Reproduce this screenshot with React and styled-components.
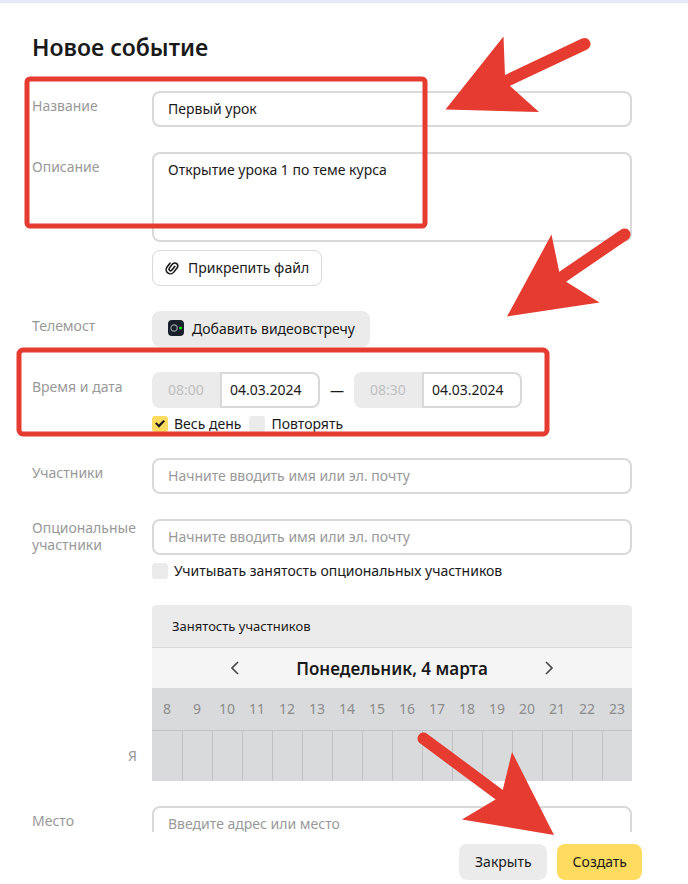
import { useState } from "react";
import styled, { createGlobalStyle, css } from "styled-components";

const GlobalStyle = createGlobalStyle`
  * {
    box-sizing: border-box;
  }
  body {
    margin: 0;
    background: #fff;
  }
  body, button, input, textarea {
    font-family: "Noto Sans", "Open Sans", sans-serif;
    font-size: 14px;
    color: #1a1a1a;
  }
`;

const Page = styled.div`
  position: relative;
  display: flex;
  flex-direction: column;
  height: 100vh;
  overflow: hidden;
  border-top: 3px solid #e6eaf7;
`;

const Form = styled.form`
  flex: 1;
  min-height: 0;
  overflow: hidden;
  padding: 29px 56px 0 32px;
`;

const Title = styled.h1`
  margin: 0 0 29px;
  font-size: 23px;
  line-height: 30px;
  font-weight: 600;
`;

const Rows = styled.div`
  display: flex;
  flex-direction: column;
  gap: 25px;
`;

const Row = styled.div`
  display: grid;
  grid-template-columns: 120px minmax(0, 1fr);
`;

const Label = styled.label`
  padding-top: ${(props) => (props.$double ? 0 : 6)}px;
  padding-right: 16px;
  line-height: 17px;
  color: #999;
`;

const SelfLabel = styled.span`
  align-self: end;
  padding: 0 15px 17px 0;
  line-height: 17px;
  text-align: right;
  color: #999;
`;

const Control = styled.div`
  display: flex;
  flex-direction: column;
  align-items: flex-start;
  gap: 8px;
`;

const field = css`
  display: block;
  width: 100%;
  border: 2px solid #d9d9d9;
  border-radius: 8px;
  background: #fff;
  outline: none;

  &::placeholder {
    color: #999;
    opacity: 1;
  }
`;

const Input = styled.input`
  ${field}
  height: 36px;
  padding: 0 14px 2px;
`;

const TextArea = styled.textarea`
  ${field}
  height: 90px;
  padding: 7px 14px;
  line-height: 18px;
  resize: none;
`;

const Button = styled.button`
  display: flex;
  align-items: center;
  gap: 8px;
  height: 36px;
  padding: 0 15px 2px 16px;
  border: 0;
  border-radius: 8px;
  background: ${(props) => (props.$primary ? "#ffdb60" : "#ebebeb")};
  cursor: pointer;
`;

const OutlineButton = styled(Button)`
  padding: 0 12px 2px 11px;
  border: 1px solid #d9d9d9;
  background: #fff;
`;

const Period = styled.div`
  display: flex;
  align-items: center;
  gap: 10px;
`;

const DateTime = styled.div`
  display: flex;
  width: 168px;
`;

const TimeInput = styled.input`
  width: 68px;
  height: 36px;
  padding: 0 0 2px 16px;
  border: 0;
  border-radius: 8px 0 0 8px;
  background: #ebebeb;

  &:disabled {
    color: #bfbfbf;
  }
`;

const DateInput = styled.input`
  ${field}
  flex: 1;
  min-width: 0;
  height: 36px;
  padding: 0 8px 2px;
  border-radius: 0 8px 8px 0;
`;

const Checks = styled.div`
  display: flex;
  gap: 8px;
`;

const CheckLabel = styled.label`
  display: flex;
  align-items: flex-start;
  gap: 6px;
  height: 17px;
  line-height: 16px;
  cursor: pointer;
`;

const Checkbox = styled.input`
  appearance: none;
  display: grid;
  width: 16px;
  height: 16px;
  margin: 0;
  border-radius: 3px;
  background: #ebebeb;

  &:checked {
    background: #ffdb60;
  }
  &:checked::before {
    content: "";
    width: 10px;
    height: 8px;
    place-self: center;
    background: #1a1a1a;
    clip-path: polygon(0 45%, 16% 28%, 38% 55%, 84% 0, 100% 16%, 40% 96%);
  }
`;

const Busy = styled.section`
  width: 100%;
  border-radius: 4px 4px 0 0;
  overflow: hidden;
`;

const BusyHeader = styled.h2`
  margin: 0;
  padding: 0 20px;
  border-bottom: 1px solid #d9d9d9;
  background: #ebebeb;
  font-size: 13px;
  line-height: 42px;
  font-weight: 400;
`;

const DayNav = styled.div`
  display: flex;
  align-items: center;
  justify-content: space-between;
  height: 40px;
  padding: 0 74px;
  background: #f5f5f5;
  font-size: 17px;
  font-weight: 600;
`;

const NavButton = styled.button`
  display: flex;
  padding: 0;
  border: 0;
  background: none;
  cursor: pointer;
`;

const Hours = styled.table`
  width: 100%;
  table-layout: fixed;
  border-collapse: collapse;
  background: #d9dadc;

  th {
    height: 42px;
    padding: 0;
    border-bottom: 1px solid #c0c1c3;
    font-weight: 400;
    color: #8c8c8c;
  }
  td {
    height: 51px;
    padding: 0;
  }
  td + td {
    border-left: 1px solid #c0c1c3;
  }
`;

const Footer = styled.footer`
  display: flex;
  justify-content: flex-end;
  gap: 10px;
  padding: 12px 46px 4px;
`;

const Marks = styled.svg`
  position: absolute;
  top: -3px;
  left: 0;
  pointer-events: none;
`;

const ClipIcon = () => (
  <svg width="16" height="16" viewBox="0 0 16 16" fill="none" stroke="#1a1a1a">
    <path
      transform="translate(8 8.500) rotate(38) scale(0.850)"
      d="M1.800-3V2.500a1.900 1.900 0 0 1-3.800 0V-3.500a3.500 3.500 0 0 1 7 0V3a5 5 0 0 1-10 0V-2.500"
      strokeWidth="1.9"
      strokeLinecap="round"
      strokeLinejoin="round"
    />
  </svg>
);

const VideoIcon = () => (
  <svg width="16" height="16" viewBox="0 0 16 16">
    <rect width="16" height="16" rx="4" fill="#17202b" />
    <circle cx="6" cy="8" r="3.1" fill="none" stroke="#9aa0a6" strokeWidth="1.1" />
    <rect x="11.300" y="6.800" width="2.500" height="2.500" rx="0.600" fill="#00f01c" />
  </svg>
);

const Chevron = ({ right }) => (
  <svg width="18" height="18" viewBox="0 0 18 18" fill="none" stroke="#444" strokeWidth="1.6">
    <path d={right ? "M6 3l6 6-6 6" : "M12 3L6 9l6 6"} />
  </svg>
);

const HOURS = [8, 9, 10, 11, 12, 13, 14, 15, 16, 17, 18, 19, 20, 21, 22, 23];

const Check = ({ label, checked = false }) => {
  const [on, setOn] = useState(checked);
  return (
    <CheckLabel>
      <Checkbox type="checkbox" checked={on} onChange={() => setOn(!on)} />
      {label}
    </CheckLabel>
  );
};

const Moment = ({ id, name, time, date }) => (
  <DateTime>
    <TimeInput disabled defaultValue={time} aria-label={`${name}: время`} />
    <DateInput id={id} defaultValue={date} aria-label={`${name}: дата`} />
  </DateTime>
);

const Highlights = () => (
  <Marks width="688" height="884" viewBox="0 0 688 884" fill="#e53b30" aria-hidden="true">
    <g fill="none" stroke="#e53b30" strokeWidth="5">
      <rect x="27" y="79" width="398" height="147" rx="3" />
      <rect x="19" y="350" width="528" height="84" rx="4" />
    </g>
    <g stroke="#e53b30" strokeWidth="12" strokeLinecap="round">
      <path d="M584.5 44 500 84" />
      <path d="M624.5 234.5 555 282" />
      <path d="M423.5 738.5 505 799" />
    </g>
    <path d="M445.5 109.5 503.5 36.5 505 76 510 86 539 112Z" />
    <path d="M507 316.5 551.5 234.5 559.5 273 566.5 282 599.5 302.5Z" />
    <path d="M554 835 512 752 502.5 791 495.5 799.5 462 819.5Z" />
  </Marks>
);

const App = () => (
  <>
    <GlobalStyle />
    <Page>
      <Form id="event" onSubmit={(e) => e.preventDefault()}>
        <Title>Новое событие</Title>
        <Rows>
          <Row>
            <Label htmlFor="name">Название</Label>
            <Input id="name" defaultValue="Первый урок" />
          </Row>
          <Row>
            <Label htmlFor="description">Описание</Label>
            <Control>
              <TextArea id="description" defaultValue="Открытие урока 1 по теме курса" />
              <OutlineButton type="button">
                <ClipIcon />
                Прикрепить файл
              </OutlineButton>
            </Control>
          </Row>
          <Row>
            <Label htmlFor="video">Телемост</Label>
            <Control>
              <Button type="button" id="video">
                <VideoIcon />
                Добавить видеовстречу
              </Button>
            </Control>
          </Row>
          <Row>
            <Label htmlFor="start">Время и дата</Label>
            <Control>
              <Period>
                <Moment id="start" name="Начало" time="08:00" date="04.03.2024" />
                <span>—</span>
                <Moment id="end" name="Конец" time="08:30" date="04.03.2024" />
              </Period>
              <Checks>
                <Check label="Весь день" checked />
                <Check label="Повторять" />
              </Checks>
            </Control>
          </Row>
          <Row>
            <Label htmlFor="members">Участники</Label>
            <Input id="members" placeholder="Начните вводить имя или эл. почту" />
          </Row>
          <Row>
            <Label htmlFor="optional" $double>
              Опциональные участники
            </Label>
            <Control>
              <Input id="optional" placeholder="Начните вводить имя или эл. почту" />
              <Check label="Учитывать занятость опциональных участников" />
            </Control>
          </Row>
          <Row>
            <SelfLabel>Я</SelfLabel>
            <Busy>
              <BusyHeader>Занятость участников</BusyHeader>
              <DayNav>
                <NavButton type="button" aria-label="Предыдущий день">
                  <Chevron />
                </NavButton>
                Понедельник, 4 марта
                <NavButton type="button" aria-label="Следующий день">
                  <Chevron right />
                </NavButton>
              </DayNav>
              <Hours>
                <thead>
                  <tr>
                    {HOURS.map((hour) => (
                      <th key={hour}>{hour}</th>
                    ))}
                  </tr>
                </thead>
                <tbody>
                  <tr>
                    {HOURS.map((hour) => (
                      <td key={hour} />
                    ))}
                  </tr>
                </tbody>
              </Hours>
            </Busy>
          </Row>
          <Row>
            <Label htmlFor="place">Место</Label>
            <Input id="place" placeholder="Введите адрес или место" />
          </Row>
        </Rows>
      </Form>
      <Footer>
        <Button type="button">Закрыть</Button>
        <Button type="submit" form="event" $primary>
          Создать
        </Button>
      </Footer>
      <Highlights />
    </Page>
  </>
);

export default App;
